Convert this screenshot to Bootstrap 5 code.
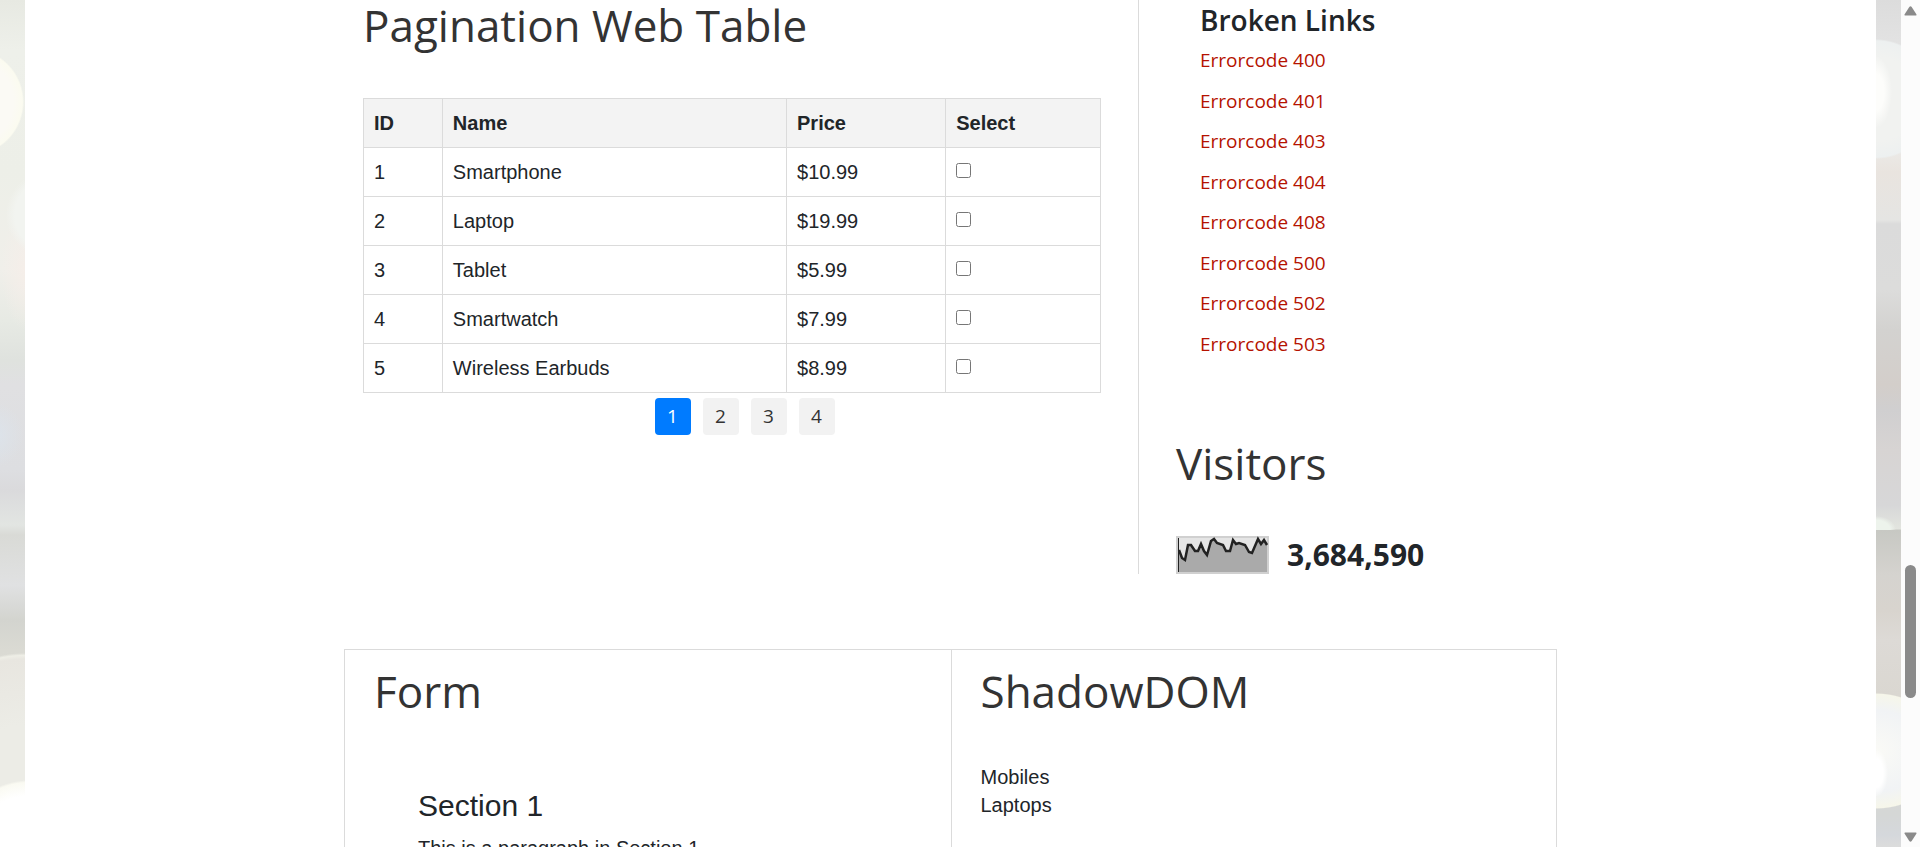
<!DOCTYPE html>
<html lang="en">
<head>
<meta charset="utf-8">
<meta name="viewport" content="width=device-width, initial-scale=1">
<title>Pagination Web Table</title>
<link href="https://cdn.jsdelivr.net/npm/bootstrap@5.3.0/dist/css/bootstrap.min.css" rel="stylesheet">
<style>
  :root { --line: #dbdbdb; --ui: "Open Sans", "Noto Sans", sans-serif; }
  body { font-family: "Liberation Sans", Arial, sans-serif; font-size: 20px; line-height: 28px; color: #212529; background: #fff; }

  /* soft bokeh photo edges on both sides of the sheet */
  .edge { flex: 0 0 25px; }
  .edge-left { background:
    radial-gradient(circle 54px at -30px 102px, #fbfaf5 0 80%, #fbfbf0 97%, transparent 100%),
    radial-gradient(circle 44px at 50px 215px, #f2f4f0 0 80%, transparent 100%),
    radial-gradient(ellipse 24px 60px at 25px 270px, #f5eee9 0, transparent 100%),
    radial-gradient(circle 34px at -10px 435px, #dce4ec 0, transparent 100%),
    radial-gradient(circle 80px at 30px 860px, #fff 0 80%, #fafaf2 97%, transparent 100%),
    radial-gradient(circle 120px at 25px 773px, #ecece6 0 40%, #e8e6e0 95%, #eeeee6 98%, transparent 100%),
    linear-gradient(#e7e9e2 0, #eef0ea 50px, #edefe8 170px, #f0efea 270px, #e7eae4 320px, #dfe2de 360px, #e0e0e2 385px, #dddee1 470px, #dadadc 490px, #e2e5e2 525px, #d9dad6 535px, #e0e1e2 585px, #d3d4cf 620px, #dadad3 650px, #e8e8e2 847px); }
  .edge-right { background:
    radial-gradient(ellipse 16px 36px at 0 92px, #fdfdfb 0 50%, transparent 100%),
    radial-gradient(ellipse 12px 24px at 0 773px, #fff 0 60%, transparent 100%),
    radial-gradient(ellipse 70px 58px at 0 751px, #fafaf6 0, #f1f3f5 70%, #f6f6ea 98%, transparent 100%),
    radial-gradient(ellipse 60px 60px at 0 99px, #f1f2f0 0 70%, #edf0f0 97%, transparent 100%),
    radial-gradient(ellipse 20px 14px at 0 530px, #edf3ec 0 70%, transparent 100%) top / 100% 530px no-repeat,
    linear-gradient(#dcdcdc 0, #e2e2e2 40px, #ececea 140px, #e9e4df 172px, #e5e5e3 220px, #dbdbdb 224px, #dcdcdb 290px, #d3d2d0 330px, #d3ceca 385px, #d0cfd0 410px, #d7d4d3 450px, #d7d7d8 505px, #e3e5df 529px, #c7c8c3 530px, #d5d3cf 575px, #d8d4ce 610px, #dddad6 640px, #dad7d1 695px, #d5d7d6 815px, #d5d8dc 835px, #dcdcdc 847px); }

  .page-inner { max-width: 1213px; }
  .pane-main { flex: 0 0 795px; padding: 0 37px 0 19px; border-right: 1px solid var(--line); }
  .pane-side { padding-left: 37px; }
  .section-title { font-family: var(--ui); font-size: 44px; line-height: 50px; font-weight: 400; color: #333; margin: 0; }

  .product-table { margin-top: 48px; border-collapse: collapse; table-layout: fixed; }
  .product-table th, .product-table td { height: 49px; padding: 0 10px; border: 1px solid var(--line); }
  .product-table th { background: #f3f3f3; }
  .product-table input { display: block; width: 15px; height: 15px; margin: 0 0 4px; }

  .pager { padding-left: 25px; margin-top: 5px; gap: 12px; font-family: var(--ui); font-size: 19px; }
  .pager a { display: block; width: 36px; line-height: 37px; text-align: center; text-decoration: none; color: #333; background: #f2f2f2; border-radius: 4px; }
  .pager a.active { background: #007bff; color: #fff; }

  .links-block { padding-left: 24px; font-family: var(--ui); }
  .links-title { font-size: 28px; line-height: 40px; font-weight: 600; margin: 0; }
  .error-list { display: grid; grid-auto-rows: 1fr; min-height: 324px; align-items: center; font-size: 19px; }
  .error-list a { color: #b51200; text-decoration: none; }

  .visitors { margin-top: 74px; }
  .visitor-stat { margin-top: 48px; gap: 18px; }
  .visitor-count { font-family: var(--ui); font-size: 30px; line-height: 38px; font-weight: 700; }

  .panels { margin-top: 75px; border: 1px solid var(--line); border-bottom: 0; }
  .panel-box { padding: 16px 29px; min-height: 240px; }
  .panel-box + .panel-box { border-left: 1px solid var(--line); }
  .form-section { padding: 72px 44px 0; }
  .form-section h3 { font-size: 30px; line-height: 36px; font-weight: 400; margin: 0 0 10px; }
  .dom-items { margin-top: 47px; }

  .scroll-rail { flex: 0 0 19px; background: #fcfcfc; padding: 6px 0 5px; }
  .scroll-thumb { width: 11px; height: 133px; margin-top: 549px; border-radius: 6px; background: #8a8a8a; }
</style>
</head>
<body>
<div class="d-flex vh-100 overflow-hidden">
  <div class="edge edge-left"></div>
  <main class="flex-grow-1 bg-white">
    <div class="page-inner mx-auto">
      <div class="d-flex">
        <section class="pane-main">
          <h2 class="section-title">Pagination Web Table</h2>
          <table class="product-table w-100">
            <colgroup><col style="width:10.7%"><col style="width:46.7%"><col style="width:21.6%"><col style="width:21%"></colgroup>
            <thead><tr><th>ID</th><th>Name</th><th>Price</th><th>Select</th></tr></thead>
            <tbody>
              <tr><td>1</td><td>Smartphone</td><td>$10.99</td><td><input type="checkbox" aria-label="Select Smartphone"></td></tr>
              <tr><td>2</td><td>Laptop</td><td>$19.99</td><td><input type="checkbox" aria-label="Select Laptop"></td></tr>
              <tr><td>3</td><td>Tablet</td><td>$5.99</td><td><input type="checkbox" aria-label="Select Tablet"></td></tr>
              <tr><td>4</td><td>Smartwatch</td><td>$7.99</td><td><input type="checkbox" aria-label="Select Smartwatch"></td></tr>
              <tr><td>5</td><td>Wireless Earbuds</td><td>$8.99</td><td><input type="checkbox" aria-label="Select Wireless Earbuds"></td></tr>
            </tbody>
          </table>
          <ul class="pager list-unstyled d-flex justify-content-center mb-0">
            <li><a class="active" href="#">1</a></li>
            <li><a href="#">2</a></li>
            <li><a href="#">3</a></li>
            <li><a href="#">4</a></li>
          </ul>
        </section>
        <aside class="pane-side flex-grow-1">
          <div class="links-block">
            <h3 class="links-title">Broken Links</h3>
            <ul class="error-list list-unstyled mb-0">
              <li><a href="#">Errorcode 400</a></li>
              <li><a href="#">Errorcode 401</a></li>
              <li><a href="#">Errorcode 403</a></li>
              <li><a href="#">Errorcode 404</a></li>
              <li><a href="#">Errorcode 408</a></li>
              <li><a href="#">Errorcode 500</a></li>
              <li><a href="#">Errorcode 502</a></li>
              <li><a href="#">Errorcode 503</a></li>
            </ul>
          </div>
          <div class="visitors">
            <h2 class="section-title">Visitors</h2>
            <div class="visitor-stat d-flex align-items-center">
              <svg width="93" height="38" viewBox="0 0 93 38" aria-hidden="true">
                <rect width="93" height="38" fill="#d0d0d0"/>
                <rect x="2" y="2" width="89" height="34" fill="#e5e5e5"/>
                <path d="M3 36V14L6 22L9 24L12 9H15L19 15H22L25 8L28 15L31 19L35 5L38 3L41 7L47 9L50 15H54L57 4L60 8L63 7L69 9L73 16L76 17L82 3L85 8L88 4L91 9V36Z" fill="#aaa"/>
                <path d="M3 14L6 22L9 24L12 9H15L19 15H22L25 8L28 15L31 19L35 5L38 3L41 7L47 9L50 15H54L57 4L60 8L63 7L69 9L73 16L76 17L82 3L85 8L88 4L91 9" fill="none" stroke="#222" stroke-width="2.500"/>
                <path d="M2.500 2V36" stroke="#222"/>
              </svg>
              <span class="visitor-count">3,684,590</span>
            </div>
          </div>
        </aside>
      </div>
      <div class="panels d-flex">
        <section class="panel-box w-50">
          <h2 class="section-title">Form</h2>
          <div class="form-section">
            <h3>Section 1</h3>
            <p class="mb-0">This is a paragraph in Section 1.</p>
          </div>
        </section>
        <section class="panel-box w-50">
          <h2 class="section-title">ShadowDOM</h2>
          <div class="dom-items">
            <div>Mobiles</div>
            <div>Laptops</div>
          </div>
        </section>
      </div>
    </div>
  </main>
  <div class="edge edge-right"></div>
  <div class="scroll-rail d-flex flex-column align-items-center" aria-hidden="true">
    <svg width="13" height="10" viewBox="0 0 13 10"><path d="M1 9.500Q0 9.500 .8 8L5.300 1Q6.500-.6 7.700 1L12.200 8Q13 9.500 12 9.500Z" fill="#8a8a8a"/></svg>
    <div class="scroll-thumb"></div>
    <svg class="mt-auto" width="13" height="10" viewBox="0 0 13 10"><path d="M1 .5Q0 .5 .8 2L5.300 9Q6.500 10.600 7.700 9L12.200 2Q13 .5 12 .5Z" fill="#8a8a8a"/></svg>
  </div>
</div>
<script src="https://cdn.jsdelivr.net/npm/bootstrap@5.3.0/dist/js/bootstrap.bundle.min.js"></script>
</body>
</html>
